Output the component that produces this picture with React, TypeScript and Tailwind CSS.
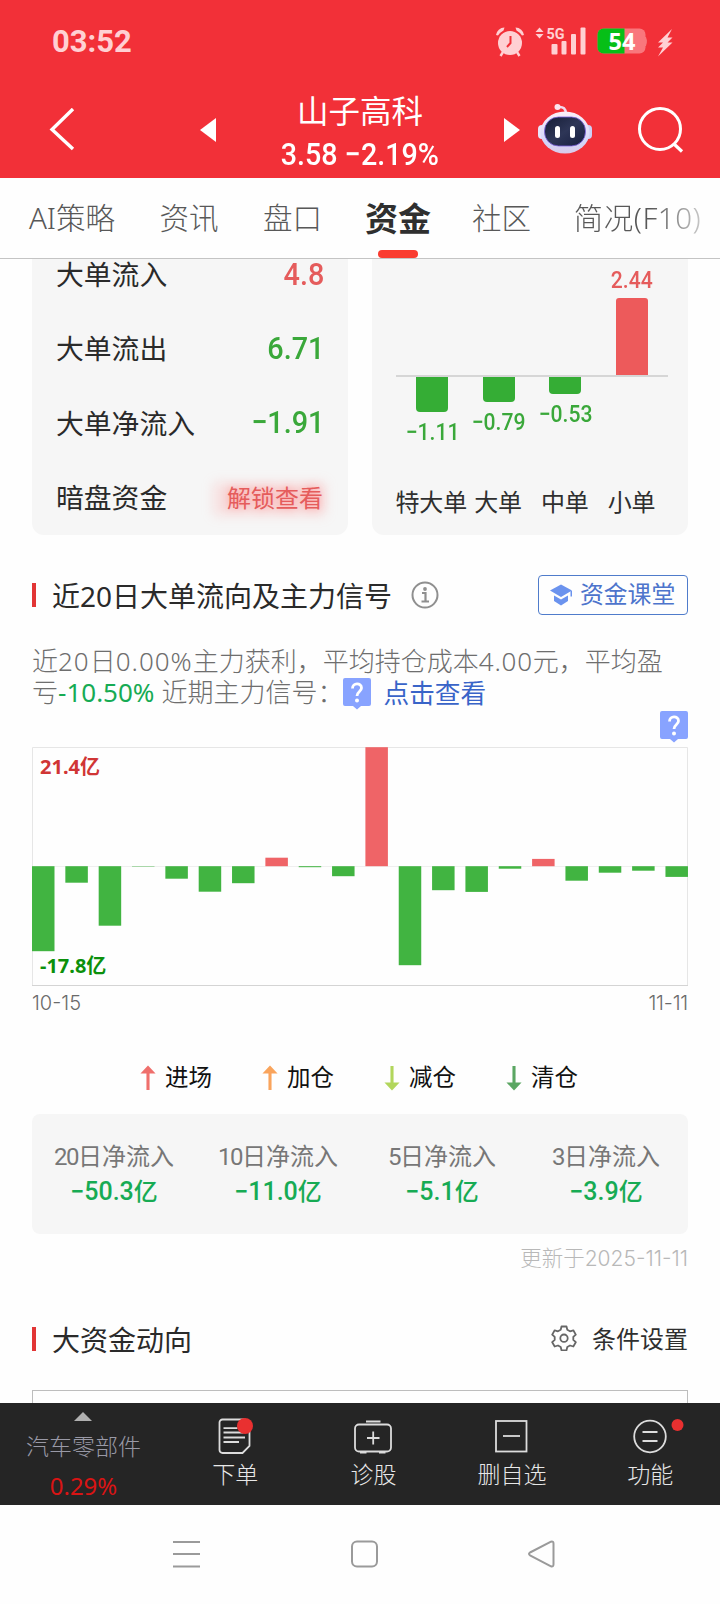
import React from 'react';

const UP = '#ef6467';
const DOWN = '#41b441';

const tabs = [
  { label: 'AI策略', cell: 'w-[86px]' },
  { label: '资讯', cell: 'w-[60px]' },
  { label: '盘口', cell: 'w-[59px]' },
  { label: '资金', cell: 'w-[64px]', active: true },
  { label: '社区', cell: 'w-[55px]' },
  { label: '简况(F10)', cell: 'w-[129px]', faded: true },
];

const bigOrders = [
  { label: '大单流入', value: '4.8', color: 'text-[#e55c5c]' },
  { label: '大单流出', value: '6.71', color: 'text-[#3aa83a]' },
  { label: '大单净流入', value: '−1.91', color: 'text-[#3aa83a]' },
];

const orderSizes = [
  { label: '特大单', value: -1.11, text: '−1.11', height: 35 },
  { label: '大单', value: -0.79, text: '−0.79', height: 25 },
  { label: '中单', value: -0.53, text: '−0.53', height: 17 },
  { label: '小单', value: 2.44, text: '2.44', height: 77 },
];

// signed bar heights in px, positive is net inflow
const flows = [
  -85, -16.5, -59.5, -0.4, -12.5, -25.5, -17, 8.5, -1, -10,
  119, -99, -24, -25.7, -2.5, 7.3, -14.5, -6.5, -4.5, -10.7,
];

const legend = [
  { label: '进场', color: '#ef6f6c', up: true },
  { label: '加仓', color: '#f9a45c', up: true },
  { label: '减仓', color: '#b2d65c', up: false },
  { label: '清仓', color: '#5ba663', up: false },
];

const netInflows = [
  { days: '20', value: '−50.3' },
  { days: '10', value: '−11.0' },
  { days: '5', value: '−5.1' },
  { days: '3', value: '−3.9' },
];

const StatusBar = () => (
  <div className="h-[82px] flex items-center pl-[52px] pr-[45px]">
    <span className="font-[Roboto] font-bold text-[31px] leading-none text-[#ffd0d3]">03:52</span>
    <svg className="ml-auto" width="180" height="34" viewBox="495.500 24 180 34">
      <g fill="#ffd0d3">
        <circle cx="510.500" cy="43" r="12" />
        <path d="M496.500 35a8.500 8.500 0 0 1 8.500-7.500l-1 3a16 16 0 0 0-5.500 5zM524.500 35a8.500 8.500 0 0 0-8.500-7.500l1 3a16 16 0 0 1 5.500 5z" />
        <path d="M503.500 52l-2.500 4M517.500 52l2.500 4" stroke="#ffd0d3" strokeWidth="2.400" />
        <path d="M536 32l4-4.500 4 4.500zM536 34l4 4.500 4-4.500z" />
        <rect x="552" y="44" width="6" height="10.500" rx="1" />
        <rect x="562" y="41" width="5" height="13.500" rx="1" />
        <rect x="571.500" y="34" width="5" height="20.500" rx="1" />
        <rect x="581" y="27.500" width="5" height="27" rx="1" />
        <path d="M672.500 29l-14 13.500h5l-5 5h5l-5 9 14.500-14h-5l5-5h-5z" />
        <text x="547" y="38.500" fontSize="15.500" fontWeight="700" fontFamily="Roboto" textLength="18" lengthAdjust="spacingAndGlyphs">5G</text>
      </g>
      <path d="M511 36v7l-3.500 4" stroke="#f23038" strokeWidth="2" fill="none" />
      <rect x="598" y="28.500" width="48" height="25" rx="6" fill="#f9777c" />
      <path d="M604 28.500h21v25h-21a6 6 0 0 1-6-6v-13a6 6 0 0 1 6-6z" fill="#06bf17" />
      <path d="M646 37q2 4 0 9z" fill="#f9777c" stroke="#f9777c" />
      <text x="622.500" y="49.500" fontSize="23.500" fontWeight="700" fontFamily="Noto Sans" fill="#fff" textAnchor="middle">54</text>
    </svg>
  </div>
);

const Robot = () => (
  <svg width="54" height="52" viewBox="0 0 54 52">
    <defs>
      <linearGradient id="shell" x1="0" y1="0" x2="0" y2="1">
        <stop offset="0" stopColor="#fdeff8" />
        <stop offset="0.700" stopColor="#d3d6fa" />
        <stop offset="1" stopColor="#d9cbe9" />
      </linearGradient>
      <linearGradient id="visor" x1="0" y1="0" x2="1" y2="1">
        <stop offset="0" stopColor="#161d36" />
        <stop offset="0.500" stopColor="#2e3657" />
        <stop offset="1" stopColor="#161d3f" />
      </linearGradient>
    </defs>
    <path d="M20 4q8-1 8 7" stroke="#f0d9ee" strokeWidth="2.500" fill="none" />
    <circle cx="19.500" cy="4" r="3" fill="#fbe4ee" />
    <rect x="0" y="22" width="8" height="14" rx="4" fill="#e8e4fa" />
    <rect x="46" y="22" width="8" height="14" rx="4" fill="#cdd0f5" />
    <ellipse cx="27" cy="29.500" rx="24.500" ry="21" fill="url(#shell)" />
    <rect x="6.500" y="14" width="41" height="29" rx="14" fill="url(#visor)" stroke="#7f63e0" strokeWidth="0.800" />
    <rect x="17" y="23" width="5" height="12" rx="2.500" fill="#fff" />
    <rect x="32" y="23" width="5" height="12" rx="2.500" fill="#fff" />
  </svg>
);

const Header = () => (
  <header className="h-[178px] shrink-0 bg-[#f23038] text-white">
    <StatusBar />
    <div className="h-[96px] flex items-center">
      <svg className="ml-[49px]" width="26" height="44" viewBox="0 0 26 44">
        <path d="M24 1L3 21.500 24 41" stroke="#fff" strokeWidth="3.400" fill="none" />
      </svg>
      <svg className="ml-[125px]" width="16" height="24" viewBox="0 0 16 24">
        <path d="M16 0v24L0 12z" fill="#fff" />
      </svg>
      <div className="w-[288px] pt-[12px] flex flex-col items-center">
        <span className="text-[31.500px] leading-[38px]">山子高科</span>
        <span className="font-[Roboto] font-medium text-[31.500px] leading-[50px] whitespace-nowrap scale-x-[0.910]">
          3.58 −2.19%
        </span>
      </div>
      <svg width="16" height="24" viewBox="0 0 16 24">
        <path d="M0 0v24l16-12z" fill="#fff" />
      </svg>
      <div className="ml-[18px] pb-[3px]"><Robot /></div>
      <svg className="ml-[45px]" width="48" height="48" viewBox="0 0 48 48">
        <circle cx="23" cy="23" r="20.500" stroke="#fff" strokeWidth="3" fill="none" />
        <path d="M37 38l8 7.500" stroke="#fff" strokeWidth="3.200" />
      </svg>
    </div>
  </header>
);

const Tabs = () => (
  <nav className="h-[81px] shrink-0 border-b border-[#c4c4c4] flex pl-[29px] gap-[44px] overflow-hidden">
    {tabs.map((t) => (
      <div key={t.label} className={`${t.cell} shrink-0 flex flex-col items-center`}>
        <span
          className={`h-[72px] flex items-center pt-[9px] whitespace-nowrap ${
            t.active
              ? 'text-[33px] font-bold text-[#2f2f2f]'
              : t.faded
                ? 'text-[29.500px] tracking-[0.500px] font-light bg-linear-to-r from-[#585858] from-60% to-[#c8c8c8] bg-clip-text text-transparent'
                : 'text-[29.500px] font-light text-[#585858]'
          }`}
        >
          {t.label}
        </span>
        {t.active && <span className="w-[40px] h-[8px] rounded-full bg-[#fa3c30]" />}
      </div>
    ))}
  </nav>
);

const BigOrderCard = () => (
  <div className="w-[316px] h-[276px] rounded-b-[12px] bg-[#f6f6f6] px-[24px] text-[27.800px] text-[#2a2a2a]">
    <div className="-mt-[21px]">
      {bigOrders.map((o) => (
        <div key={o.label} className="h-[74.200px] flex items-center justify-between">
          <span>{o.label}</span>
          <span className={`font-[Roboto] font-medium text-[32px] pb-[2px] origin-right scale-x-[0.900] ${o.color}`}>{o.value}</span>
        </div>
      ))}
      <div className="h-[74.200px] flex items-center justify-between">
        <span>暗盘资金</span>
        <span className="relative pr-px text-[24px] text-[#e55c5c]">
          <span className="absolute -left-[14px] -right-[2px] top-[2px] h-[34px] rounded bg-[#ff8a8a]/20 blur-[6px]" />
          <span className="relative [text-shadow:0_0_10px_#ff9090]">解锁查看</span>
        </span>
      </div>
    </div>
  </div>
);

const OrderSizeCard = () => (
  <div className="w-[316px] h-[276px] rounded-b-[12px] bg-[#f6f6f6]">
    <div className="h-[116px] pl-[27px] pr-[23px] grid grid-cols-4 items-end">
      {orderSizes.map((s) => (
        <div key={s.label} className="flex flex-col items-center">
          {s.value > 0 && (
            <>
              <span className="font-[Roboto] font-medium text-[24px] leading-[28px] mb-[4px] scale-x-[0.880] text-[#e55c5c]">{s.text}</span>
              <span className="w-[32px] rounded-t-[3px] bg-[#ed5a5b]" style={{ height: s.height }} />
            </>
          )}
        </div>
      ))}
    </div>
    <div className="h-[2px] ml-[24px] mr-[20px] bg-[#d6d6d6]" />
    <div className="h-[107px] pl-[27px] pr-[23px] grid grid-cols-4 items-start">
      {orderSizes.map((s) => (
        <div key={s.label} className="flex flex-col items-center">
          {s.value < 0 && (
            <>
              <span className="w-[32px] rounded-b-[4px] bg-[#35ad35]" style={{ height: s.height }} />
              <span className="mt-[4.500px] font-[Roboto] font-medium text-[24px] leading-[30px] scale-x-[0.880] text-[#3aa83a]">{s.text}</span>
            </>
          )}
        </div>
      ))}
    </div>
    <div className="pl-[26px] pr-[23px] grid grid-cols-4 text-[24px] leading-[36px] text-[#2f2f2f]">
      {orderSizes.map((s) => (
        <span key={s.label} className="flex justify-center whitespace-nowrap">{s.label}</span>
      ))}
    </div>
  </div>
);

const SectionTitle = ({ children }: { children: React.ReactNode }) => (
  <div className="flex items-center">
    <span className="w-[4px] h-[24px] bg-[#e23535]" />
    <h2 className="ml-[16px] pt-px text-[28px] leading-[40px] text-[#2a2a2a] whitespace-nowrap">{children}</h2>
  </div>
);

const HelpBadge = () => (
  <svg width="28" height="32" viewBox="0 0 28 32">
    <path d="M2 0h24a2 2 0 0 1 2 2v24a2 2 0 0 1-2 2h-8l-4 3.500-4-3.500H2a2 2 0 0 1-2-2V2a2 2 0 0 1 2-2z" fill="#88a3ff" />
    <path d="M9.500 10.500c0-6 9-6 9-0.500 0 3.500-4.500 3.500-4.500 8" stroke="#fff" strokeWidth="2.800" fill="none" />
    <circle cx="14" cy="22.500" r="2" fill="#fff" />
  </svg>
);

const FlowChart = () => (
  <svg className="block" width="656" height="240" viewBox="0 0 656 240">
    <path d="M0.500 239V0.500h655V239" stroke="#e6e6e6" fill="none" />
    <path d="M0 238.500h656" stroke="#d4d4d4" />
    <path d="M0 119.500h656" stroke="#efefef" />
    {flows.map((v, i) => (
      <rect
        key={i}
        x={i * 33.340}
        y={v > 0 ? 119.200 - v : 119.200}
        width="22.500"
        height={Math.abs(v)}
        fill={v > 0 ? UP : DOWN}
      />
    ))}
    <g fontSize="20" fontWeight="700" fontFamily="'Noto Sans', 'Noto Sans CJK SC', sans-serif">
      <text x="8" y="27" fill="#d03535">21.4亿</text>
      <text x="8" y="226" fill="#0b900b">-17.8亿</text>
    </g>
  </svg>
);

const Arrow = ({ color, up }: { color: string; up: boolean }) => (
  <svg className={up ? '' : 'rotate-180'} width="18" height="28" viewBox="0 0 18 28">
    <path d="M9 0l8.500 9h-17z" fill={color} />
    <path d="M9 6v21.500" stroke={color} strokeWidth="3.500" />
  </svg>
);

const BottomItem = ({ label, children }: { label: string; children: React.ReactNode }) => (
  <div className="w-[138.400px] flex flex-col items-center pt-[14px]">
    <svg width="40" height="40" viewBox="0 0 40 40" fill="none" stroke="#dcdcdc" strokeWidth="1.800" className="overflow-visible">
      {children}
    </svg>
    <span className="text-[23px] leading-[32px] mt-px font-light text-[#e8e8e8]">{label}</span>
  </div>
);

const BottomBar = () => (
  <div className="h-[102px] shrink-0 bg-[#252525] flex">
    <div className="w-[166px] flex flex-col items-center pt-[9px]">
      <svg width="18" height="9" viewBox="0 0 18 9"><path d="M9 0l9 9H0z" fill="#b0b0b0" /></svg>
      <span className="mt-[9px] pl-[1px] text-[23px] leading-[32px] font-light text-[#9999a6]">汽车零部件</span>
      <span className="mt-[7px] pl-[1px] text-[24px] leading-[34px] text-[#d91414]">0.29%</span>
    </div>
    <BottomItem label="下单">
      <path d="M7.500 2.500h21a6 6 0 0 1 6 6V29l-7 7H7.500a3 3 0 0 1-3-3v-27.500a3 3 0 0 1 3-3z" />
      <path d="M8.500 11.200h14M8.500 15.500h20M8.500 20.500h21.500M8.500 25h15.500" />
      <circle cx="30" cy="9" r="8" fill="#e93030" stroke="none" />
    </BottomItem>
    <BottomItem label="诊股">
      <rect x="1" y="7.500" width="36" height="27" rx="4" />
      <path d="M12 4.500h14.500M19.200 14.500v13M13 21h12.500" />
      <path d="M6 35.500h6.500M25 35.500h6.500" />
    </BottomItem>
    <BottomItem label="删自选">
      <rect x="4" y="4" width="30.500" height="30.500" />
      <path d="M11 19h17" />
    </BottomItem>
    <BottomItem label="功能">
      <circle cx="20" cy="19.500" r="15.800" />
      <path d="M12.500 15h15M12.500 24h15" />
      <circle cx="47.500" cy="8" r="6" fill="#e93030" stroke="none" />
    </BottomItem>
  </div>
);

const SystemNav = () => (
  <div className="h-[98px] shrink-0 flex items-center pl-[173px] gap-[151px]">
    <svg width="27" height="28" viewBox="0 0 27 28" stroke="#9a9a9a" strokeWidth="2"><path d="M0 2h27M0 14h27M0 26.500h27" /></svg>
    <svg width="27" height="28" viewBox="0 0 27 28" stroke="#9a9a9a" strokeWidth="2" fill="none"><rect x="1" y="1.500" width="25" height="25" rx="5" /></svg>
    <svg className="-ml-[1px]" width="27" height="28" viewBox="0 0 27 28" stroke="#9a9a9a" strokeWidth="2" fill="none" strokeLinejoin="round">
      <path d="M23 1.700L2 12.500q-2 1.300 0 2.800L23 26.300q2.500 .8 2.500-2V3.700q0-2.800-2.500-2z" />
    </svg>
  </div>
);

export default function App() {
  return (
    <div className="w-[720px] h-[1604px] overflow-hidden flex flex-col bg-[#fefefe] font-['Noto_Sans','Noto_Sans_CJK_SC',sans-serif]">
      <Header />
      <Tabs />

      <main className="h-[1144px] shrink-0 overflow-hidden px-[32px]">
        <div className="flex justify-between">
          <BigOrderCard />
          <OrderSizeCard />
        </div>

        <div className="mt-[40px] h-[40px] flex items-center">
          <SectionTitle>近20日大单流向及主力信号</SectionTitle>
          <svg className="ml-[19px]" width="28" height="28" viewBox="0 0 28 28" stroke="#8f8f8f" fill="none">
            <circle cx="14" cy="14" r="12.500" strokeWidth="2" />
            <path d="M11 12h3.500v8M10.500 20.500h7.500" strokeWidth="2.200" />
            <circle cx="14" cy="8" r="1.900" fill="#8f8f8f" stroke="none" />
          </svg>
          <button className="ml-auto w-[150px] h-[40px] rounded-[4px] border border-[#4f7ccb] flex items-center pl-[11px] gap-[7px] text-[23.800px] text-[#4d74cc] whitespace-nowrap">
            <svg width="23" height="22" viewBox="0 0 23 22" fill="#6b93ee">
              <path d="M11 0.500l11 6-11 6.500L0 6.500z" />
              <path d="M4 11.500l7 4 7-4v5.500l-7 4.500-7-4.500zM20.500 7h1.500v5.500h-1.500z" />
            </svg>
            资金课堂
          </button>
        </div>

        <div className="mt-[31px] text-[26px] leading-[31px] font-light text-[#6e6e6e] whitespace-nowrap">
          <p>
            近<span className="tracking-[1px]">20</span>日<span className="tracking-[1px]">0.00%</span>主力获利，平均持仓成本
            <span className="tracking-[0.800px]">4.00</span>元，平均盈
          </p>
          <div className="h-[31px] flex items-center">
            <span>亏</span>
            <span className="font-normal text-[#17ab54]">-10.50%</span>
            <span className="ml-[7px] w-[182px]">近期主力信号：</span>
            <span className="pt-[2px]"><HelpBadge /></span>
            <span className="ml-[12px] pt-[2px] text-[25.700px] font-normal text-[#3964c8]">点击查看</span>
          </div>
        </div>
        <div className="mt-[3px] h-[36px] flex justify-end"><HelpBadge /></div>

        <FlowChart />
        <div className="mt-[1px] flex justify-between font-[Inter] text-[20px] leading-[30px] font-light text-[#6a6a6a]">
          <span>10-15</span>
          <span className="tracking-[-0.200px]">11-11</span>
        </div>

        <div className="mt-[42px] h-[36px] flex justify-center gap-[50px] pr-[2px]">
          {legend.map((l) => (
            <div key={l.label} className="w-[72px] flex items-center gap-[9px] text-[23.500px] text-[#111] whitespace-nowrap">
              <Arrow color={l.color} up={l.up} />
              {l.label}
            </div>
          ))}
        </div>

        <div className="mt-[18px] h-[120px] rounded-[8px] bg-[#f6f6f6] grid grid-cols-4 pt-[25px]">
          {netInflows.map((n) => (
            <div key={n.days} className="flex flex-col items-center text-[24px] leading-[34px]">
              <span className="text-[#777]"><span className="font-[Roboto] tracking-[-1.500px]">{n.days}</span>日净流入</span>
              <span className="font-medium text-[#17ab54]"><span className="font-[Roboto] text-[25px]">{n.value}</span>亿</span>
            </div>
          ))}
        </div>
        <p className="mt-[7px] h-[34px] text-right text-[21.500px] leading-[34px] font-light text-[#b8b8b8]">
          更新于<span className="font-[Inter] text-[21px]">2025-11-11</span>
        </p>

        <div className="mt-[44px] h-[40px] flex items-center justify-between">
          <SectionTitle>大资金动向</SectionTitle>
          <div className="flex items-center gap-[15px] text-[24px] text-[#2f2f2f]">
            <svg className="-mt-[3px]" width="26" height="26" viewBox="0 0 26 26" stroke="#666" strokeWidth="1.800" fill="none" strokeLinejoin="round">
              <path d="M10.500 1.500h5l.8 3.300 2.700 1.500 3.300-1 2.500 4.300-2.500 2.300v3l2.500 2.300-2.500 4.300-3.300-1-2.700 1.500-.8 3.300h-5l-.8-3.300L7 20.500l-3.300 1-2.500-4.300 2.500-2.300v-3L1.200 9.600l2.500-4.300 3.300 1 2.700-1.500z" />
              <circle cx="13" cy="13.200" r="3.700" />
            </svg>
            条件设置
          </div>
        </div>
        <div className="mt-[31px] h-[40px] border border-[#bdbdbd]" />
      </main>

      <BottomBar />
      <SystemNav />
    </div>
  );
}
